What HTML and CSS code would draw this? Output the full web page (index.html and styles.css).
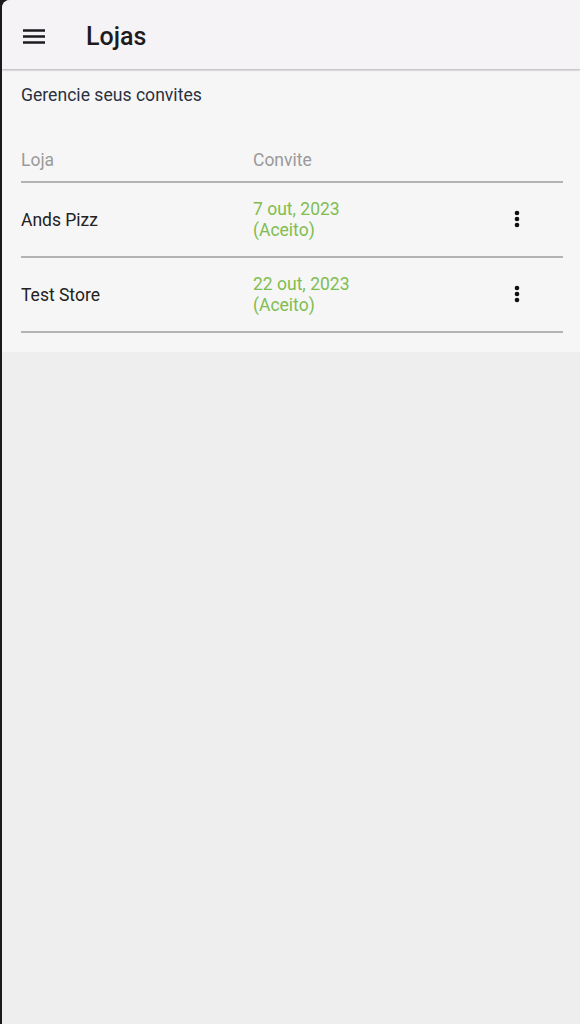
FILE: index.html
```html
<!DOCTYPE html>
<html lang="pt">
  <head>
    <meta charset="UTF-8" />
    <meta name="viewport" content="width=device-width, initial-scale=1.0" />
    <title>Lojas</title>
    <link rel="stylesheet" href="styles.css">
  </head>
  <body>
    <div class="screen">
      <header class="app-bar">
        <button class="menu-btn" aria-label="Menu">
          <svg width="24" height="24" viewBox="0 0 24 24">
            <path d="M1 6.5h22M1 12.5h22M1 18.5h22" stroke="#1d1b20" stroke-width="2.4" />
          </svg>
        </button>
        <h1>Lojas</h1>
      </header>
      <main class="panel">
        <p class="subtitle">Gerencie seus convites</p>
        <div class="table">
          <div class="row head">
            <span class="col-store">Loja</span>
            <span class="col-invite">Convite</span>
            <span class="col-actions"></span>
          </div>
          <div class="row">
            <span class="col-store">Ands Pizz</span>
            <span class="col-invite status">7 out, 2023<br />(Aceito)</span>
            <span class="col-actions">
              <svg width="6" height="18" viewBox="0 0 6 18">
                <circle cx="3" cy="3" r="2.3" /><circle cx="3" cy="9" r="2.3" /><circle cx="3" cy="15" r="2.3" />
              </svg>
            </span>
          </div>
          <div class="row">
            <span class="col-store">Test Store</span>
            <span class="col-invite status">22 out, 2023<br />(Aceito)</span>
            <span class="col-actions">
              <svg width="6" height="18" viewBox="0 0 6 18">
                <circle cx="3" cy="3" r="2.3" /><circle cx="3" cy="9" r="2.3" /><circle cx="3" cy="15" r="2.3" />
              </svg>
            </span>
          </div>
        </div>
      </main>
    </div>
  </body>
</html>
```

FILE: styles.css
```css
html,
body {
  margin: 0;
  height: 100%;
  background: #1a1a1a;
}
body {
  font-family: Roboto, "Noto Sans", Arial, sans-serif;
}
.screen {
  margin-left: 2px;
  min-height: 100%;
  background-color: #eeeeee;
  border-top-left-radius: 8px;
  overflow: hidden;
}
.app-bar {
  display: flex;
  align-items: center;
  height: 69px;
  background-color: #f5f3f5;
  box-shadow: 0 1px 2px rgba(0, 0, 0, 0.25);
  position: relative;
}
.menu-btn {
  display: flex;
  margin: 2px 0 0 20px;
  padding: 0;
  border: none;
  background: none;
}
.app-bar h1 {
  margin: 4px 0 0 40px;
  font-size: 25px;
  font-weight: 500;
  color: #1d1b20;
}
.panel {
  background-color: #f6f6f6;
  padding: 14px 17px 19px 19px;
  margin-top: 2px;
}
.subtitle {
  margin: 0;
  font-size: 17.6px;
  line-height: 21px;
  color: #2a3140;
}
.table {
  margin-top: 44px;
}
.row {
  display: flex;
  align-items: center;
  height: 73px;
  padding-top: 1px;
  box-sizing: border-box;
  border-bottom: 2px solid #b3b3b3;
  font-size: 17.5px;
  color: #222;
}
.row.head {
  height: 33px;
  padding-top: 0;
  line-height: 20px;
  align-items: flex-start;
  color: #9a9a9a;
}
.row:not(.head) {
  height: 75px;
}
.col-store {
  width: 232px;
}
.col-invite {
  flex: 1;
}
.status {
  color: #80bd4f;
  line-height: 21px;
}
.col-actions {
  width: 49px;
  display: flex;
}
.col-actions svg {
  fill: #111;
  margin-top: -2px;
}
```
